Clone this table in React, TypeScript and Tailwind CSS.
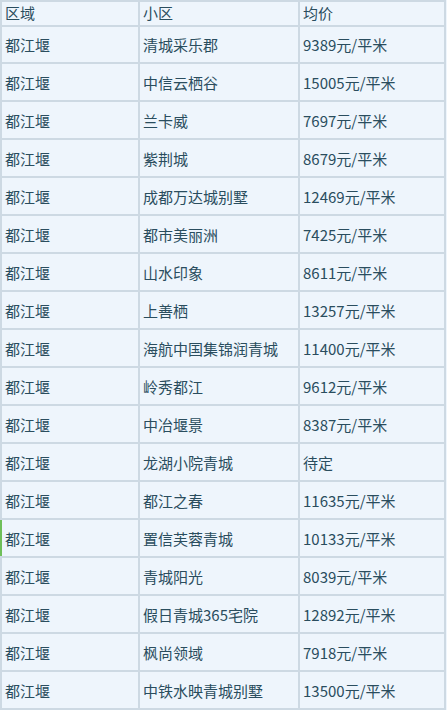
import React from "react";

const rows: [string, string, string][] = [
  ["都江堰", "清城采乐郡", "9389元/平米"],
  ["都江堰", "中信云栖谷", "15005元/平米"],
  ["都江堰", "兰卡威", "7697元/平米"],
  ["都江堰", "紫荆城", "8679元/平米"],
  ["都江堰", "成都万达城别墅", "12469元/平米"],
  ["都江堰", "都市美丽洲", "7425元/平米"],
  ["都江堰", "山水印象", "8611元/平米"],
  ["都江堰", "上善栖", "13257元/平米"],
  ["都江堰", "海航中国集锦润青城", "11400元/平米"],
  ["都江堰", "岭秀都江", "9612元/平米"],
  ["都江堰", "中冶堰景", "8387元/平米"],
  ["都江堰", "龙湖小院青城", "待定"],
  ["都江堰", "都江之春", "11635元/平米"],
  ["都江堰", "置信芙蓉青城", "10133元/平米"],
  ["都江堰", "青城阳光", "8039元/平米"],
  ["都江堰", "假日青城365宅院", "12892元/平米"],
  ["都江堰", "枫尚领域", "7918元/平米"],
  ["都江堰", "中铁水映青城别墅", "13500元/平米"],
];

const cell = "border-r-2 border-b-2 border-[#cdd9e3] pl-[3px] flex items-center";

const App: React.FC = () => {
  return (
    <div
      className="w-[447px] bg-[#eef5fc] text-[#2a4d5e] text-[15px]"
      style={{ fontFamily: '"Noto Sans CJK SC", "Noto Sans", sans-serif' }}
    >
      <div className="w-[446px] border-l-2 border-t-2 border-[#cdd9e3]">
        <div className="grid grid-cols-[138px_160px_146px] h-[24px]">
          <div className={cell}>区域</div>
          <div className={cell}>小区</div>
          <div className={cell}>均价</div>
        </div>
        {rows.map((r, i) => (
          <div key={i} className="grid grid-cols-[138px_160px_146px] h-[38px] relative">
            {i === 13 && <div className="absolute left-[-2px] top-0 h-[36px] w-[2px] bg-[#6fbf5a]" />}
            <div className={cell + " pt-[3px]"}>{r[0]}</div>
            <div className={cell + " pt-[3px]"}>{r[1]}</div>
            <div className={cell + " pt-[3px]"}>{r[2]}</div>
          </div>
        ))}
      </div>
    </div>
  );
};

export default App;
